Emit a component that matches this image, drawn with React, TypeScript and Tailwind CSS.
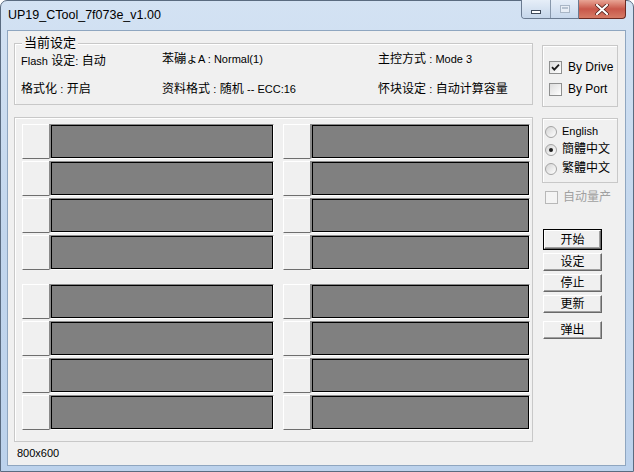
import React from "react";

function CheckBox({ checked, disabled }: { checked?: boolean; disabled?: boolean }) {
  return (
    <div
      className={
        "w-[13px] h-[13px] shrink-0 border flex items-center justify-center " +
        (disabled
          ? "border-[#b8b8b8] bg-[#f4f4f4]"
          : "border-[#8e8f8f] bg-linear-to-br from-[#dcdcdc] to-white")
      }
    >
      {checked && (
        <svg width="9" height="9" viewBox="0 0 9 9">
          <path d="M1 4.2 L3.3 6.6 L8 1.6" stroke="#1a1a1a" strokeWidth="1.8" fill="none" />
        </svg>
      )}
    </div>
  );
}

function Radio({ checked }: { checked?: boolean }) {
  return (
    <div className="w-[12px] h-[12px] shrink-0 rounded-full border border-[#a4a4a4] bg-linear-to-br from-[#d4d4d4] to-white flex items-center justify-center">
      {checked && <div className="w-[4px] h-[4px] rounded-full bg-[#1e1e1e]" />}
    </div>
  );
}

function Slot({ barW }: { barW: string }) {
  return (
    <div className="flex h-[35px]">
      <div className="w-[27px] h-full bg-[#f0f0f0] border-t border-l border-white border-b border-b-[#6e6e6e]" />
      <div className={"h-full flex border-t border-l-2 border-[#8a8a8a] border-r border-b border-r-white border-b-white " + barW}>
        <div className="flex-1 border border-black bg-[#808080]" />
      </div>
    </div>
  );
}

function SlotColumn({ barW, w }: { barW: string; w: string }) {
  return (
    <div className={"flex flex-col " + w}>
      <div className="flex flex-col gap-[2px]">
        <Slot barW={barW} />
        <Slot barW={barW} />
        <Slot barW={barW} />
        <Slot barW={barW} />
      </div>
      <div className="flex flex-col gap-[2px] mt-[14px]">
        <Slot barW={barW} />
        <Slot barW={barW} />
        <Slot barW={barW} />
        <Slot barW={barW} />
      </div>
    </div>
  );
}

function Btn({ label, def }: { label: string; def?: boolean }) {
  const inner = (
    <div className="h-full flex items-center justify-center bg-[#f0f0f0] border border-t-white border-l-white border-r-[#696969] border-b-[#696969] shadow-[inset_-1px_-1px_0_#a0a0a0] text-[12px] leading-none text-black">
      {label}
    </div>
  );
  if (def) {
    return <div className="w-[59px] h-[21px] border border-black">{inner}</div>;
  }
  return <div className="w-[59px] h-[18px]">{inner}</div>;
}

function L({ children }: { children: React.ReactNode }) {
  return <span className="text-[11px]">{children}</span>;
}

export default function App() {
  return (
    <div className="w-[634px] h-[472px] overflow-hidden font-['Liberation_Sans','Noto_Sans_CJK_SC',sans-serif] text-black">
      <div className="w-[634px] h-[472px] flex flex-col rounded-t-[7px] border border-[#5a6b80] bg-linear-to-b from-[#d3e2f3] via-[#c2d6ed] to-[#bcd2ec]">
        {/* Title bar */}
        <div className="h-[29px] flex justify-between shrink-0">
          <div className="pl-[7px] pt-[5px] text-[12.5px] text-black">UP19_CTool_7f073e_v1.00</div>
          <div className="flex mr-[7px] h-[19px] -mt-px">
            <div className="flex rounded-bl-[4px] border border-t-0 border-[#6a7a90] overflow-hidden">
              <div className="w-[29px] h-full bg-linear-to-b from-[#e6eef8] to-[#c5d6ea] border-r border-[#8797ab] flex items-center justify-center">
                <div className="w-[10px] h-[4px] mt-[5px] bg-white border border-[#3f4a5a]" />
              </div>
              <div className="w-[27px] h-full bg-linear-to-b from-[#e6eef8] to-[#c8d8ec] flex items-center justify-center">
                <div className="w-[10px] h-[8px] border border-[#a9b6c6] bg-[#e8eef6] flex items-start justify-center">
                  <div className="w-[6px] h-[2px] mt-[1px] bg-[#b6c2d0]" />
                </div>
              </div>
            </div>
            <div className="w-[47px] h-full rounded-br-[4px] border border-t-0 border-l-0 border-[#6b2a22] bg-linear-to-b from-[#e8a596] via-[#c8574a] to-[#d67b66] flex items-center justify-center">
              <svg width="14" height="11" viewBox="0 0 14 11">
                <path d="M2 1 L12 10 M12 1 L2 10" stroke="#4a1a14" strokeWidth="3.6" strokeLinecap="round" />
                <path d="M2 1 L12 10 M12 1 L2 10" stroke="#ffffff" strokeWidth="2.2" strokeLinecap="round" />
              </svg>
            </div>
          </div>
        </div>

        {/* Client area */}
        <div className="ml-[6px] w-[619px] h-[436px] border border-[#8fa6c0] bg-[#f0f0f0] flex pl-[6px]">
          {/* Left column */}
          <div className="w-[519px] flex flex-col">
            {/* info group */}
            <div className="relative mt-[12px] h-[62px] border border-[#c8c8c8] shadow-[inset_1px_1px_0_#ffffff]">
              <span className="absolute left-[7px] -top-[8px] px-[2px] bg-[#f0f0f0] text-[13px] leading-[14px]">当前设定</span>
              <div className="grid grid-cols-[141px_216px_1fr] grid-rows-[28px_31px] pl-[6px] pt-[1px] text-[12px] leading-[14px]">
                <div className="flex items-center pt-[4px]"><L>Flash</L>&nbsp;设定<L>:</L>&nbsp;自动</div>
                <div className="flex items-center">苯磞ょ<L>A : Normal(1)</L></div>
                <div className="flex items-center">主控方式&nbsp;<L>: Mode 3</L></div>
                <div className="flex items-center">格式化&nbsp;<L>:</L>&nbsp;开启</div>
                <div className="flex items-center">资料格式&nbsp;<L>:</L>&nbsp;随机&nbsp;<L>-- ECC:16</L></div>
                <div className="flex items-center">怀块设定&nbsp;<L>:</L>&nbsp;自动计算容量</div>
              </div>
            </div>
            {/* slot panel */}
            <div className="mt-[12px] h-[325px] border border-[#c8c8c8] shadow-[inset_1px_1px_0_#ffffff] flex pl-[7px] pt-[6px] gap-[9px]">
              <SlotColumn w="w-[252px]" barW="w-[225px]" />
              <SlotColumn w="w-[247px]" barW="w-[220px]" />
            </div>
            <div className="mt-[4px] pl-[3px] text-[11px] leading-[14px]">800x600</div>
          </div>

          {/* Right column */}
          <div className="ml-[9px] w-[76px] flex flex-col">
            <div className="mt-[14px] h-[62px] border border-[#c8c8c8] shadow-[inset_1px_1px_0_#ffffff] flex flex-col pl-[6px] pt-[15px] gap-[9px] text-[12px] leading-[13px]">
              <div className="flex items-center gap-[6px]">
                <CheckBox checked />
                <span>By Drive</span>
              </div>
              <div className="flex items-center gap-[6px]">
                <CheckBox />
                <span>By Port</span>
              </div>
            </div>
            <div className="mt-[11px] h-[65px] border border-[#c8c8c8] shadow-[inset_1px_1px_0_#ffffff] flex flex-col pl-[2px] pt-[6px] gap-[5px] text-[12px] leading-[13px]">
              <div className="flex items-center gap-[5px]">
                <Radio />
                <span className="text-[11px]">English</span>
              </div>
              <div className="flex items-center gap-[5px]">
                <Radio checked />
                <span>簡體中文</span>
              </div>
              <div className="flex items-center gap-[5px] mt-px">
                <Radio />
                <span>繁體中文</span>
              </div>
            </div>
            <div className="mt-[8px] pl-[3px] flex items-center gap-[5px] text-[12px] leading-[13px] text-[#a0a0a0]">
              <CheckBox disabled />
              <span>自动量产</span>
            </div>
            <div className="mt-[25px] pl-[1px] flex flex-col gap-[3px]">
              <Btn label="开始" def />
              <Btn label="设定" />
              <Btn label="停止" />
              <Btn label="更新" />
              <div className="mt-[5px]">
                <Btn label="弹出" />
              </div>
            </div>
          </div>
        </div>
      </div>
    </div>
  );
}
